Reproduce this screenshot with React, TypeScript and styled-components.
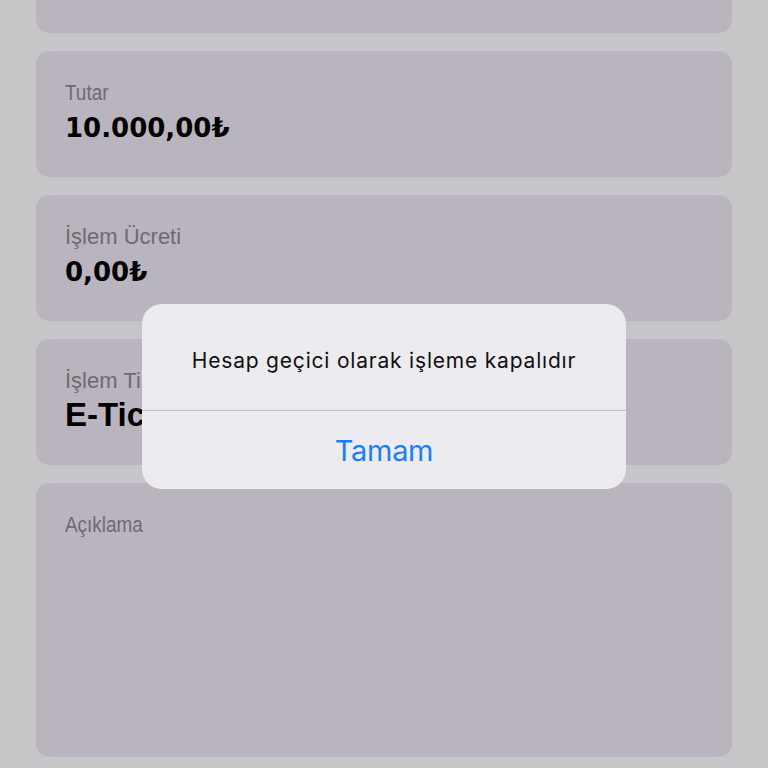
import React from 'react';
import styled, { createGlobalStyle } from 'styled-components';

type Field = {
  label: string;
  value: string;
  height: number;
  narrow?: boolean;
  big?: boolean;
};

const fields: Field[] = [
  { label: '', value: '', height: 126 },
  { label: 'Tutar', value: '10.000,00₺', narrow: true, height: 126 },
  { label: 'İşlem Ücreti', value: '0,00₺', height: 126 },
  { label: 'İşlem Tipi', value: 'E-Ticaret', big: true, height: 126 },
  { label: 'Açıklama', value: '', narrow: true, height: 274 },
];

function App() {
  return (
    <Page>
      <GlobalStyle />
      <List>
        {fields.map((f, i) => (
          <Card key={i} $height={f.height}>
            {f.label && <Label $narrow={f.narrow}>{f.label}</Label>}
            {f.value && <Value $big={f.big}>{f.value}</Value>}
          </Card>
        ))}
      </List>
      <Alert>
        <Message>Hesap geçici olarak işleme kapalıdır</Message>
        <AlertButton>Tamam</AlertButton>
      </Alert>
    </Page>
  );
}

const GlobalStyle = createGlobalStyle`
  html, body {
    margin: 0;
    padding: 0;
    background: #c6c6c8;
  }
  body {
    font-family: "Liberation Sans", Arial, sans-serif;
  }
`;

const Page = styled.div`
  position: relative;
  width: 768px;
  height: 768px;
  overflow: hidden;
  background: #c6c6c8;
`;

const List = styled.div`
  display: flex;
  flex-direction: column;
  gap: 18px;
  padding: 0 36px;
  margin-top: -93px;
`;

const Card = styled.div<{ $height: number }>`
  box-sizing: border-box;
  height: ${(p) => p.$height}px;
  background: #b9b4be;
  border-radius: 14px;
  padding: 29px 29px 0;
  display: flex;
  flex-direction: column;
  gap: 6px;
`;

const Label = styled.div<{ $narrow?: boolean }>`
  font-family: "Liberation Sans", Arial, sans-serif;
  font-size: 22px;
  line-height: 26px;
  color: #6e6a72;
  white-space: nowrap;
  ${(p) => p.$narrow && 'transform: scaleX(0.86); transform-origin: left;'}
`;

const Value = styled.div<{ $big?: boolean }>`
  font-family: ${(p) => (p.$big ? '"Liberation Sans", Arial' : '"DejaVu Sans"')}, sans-serif;
  font-weight: bold;
  font-size: ${(p) => (p.$big ? '33px' : '26px')};
  line-height: ${(p) => (p.$big ? '38px' : '32px')};
  margin-top: ${(p) => (p.$big ? '-4px' : '0')};
  color: #000;
  white-space: nowrap;
`;

const Alert = styled.div`
  position: absolute;
  left: 142px;
  top: 304px;
  width: 484px;
  height: 185px;
  background: #ecebef;
  border-radius: 20px;
  display: flex;
  flex-direction: column;
  overflow: hidden;
`;

const Message = styled.div`
  height: 107px;
  display: flex;
  align-items: center;
  justify-content: center;
  padding-top: 6px;
  box-sizing: border-box;
  font-family: "Inter", "Liberation Sans", sans-serif;
  font-size: 21px;
  letter-spacing: 0.8px;
  color: #111;
  border-bottom: 1px solid #c4c3c8;
`;

const AlertButton = styled.div`
  flex: 1;
  display: flex;
  align-items: center;
  justify-content: center;
  font-family: "Inter", "Liberation Sans", sans-serif;
  font-size: 29px;
  letter-spacing: -0.3px;
  color: #1a7ff2;
`;

export default App;
